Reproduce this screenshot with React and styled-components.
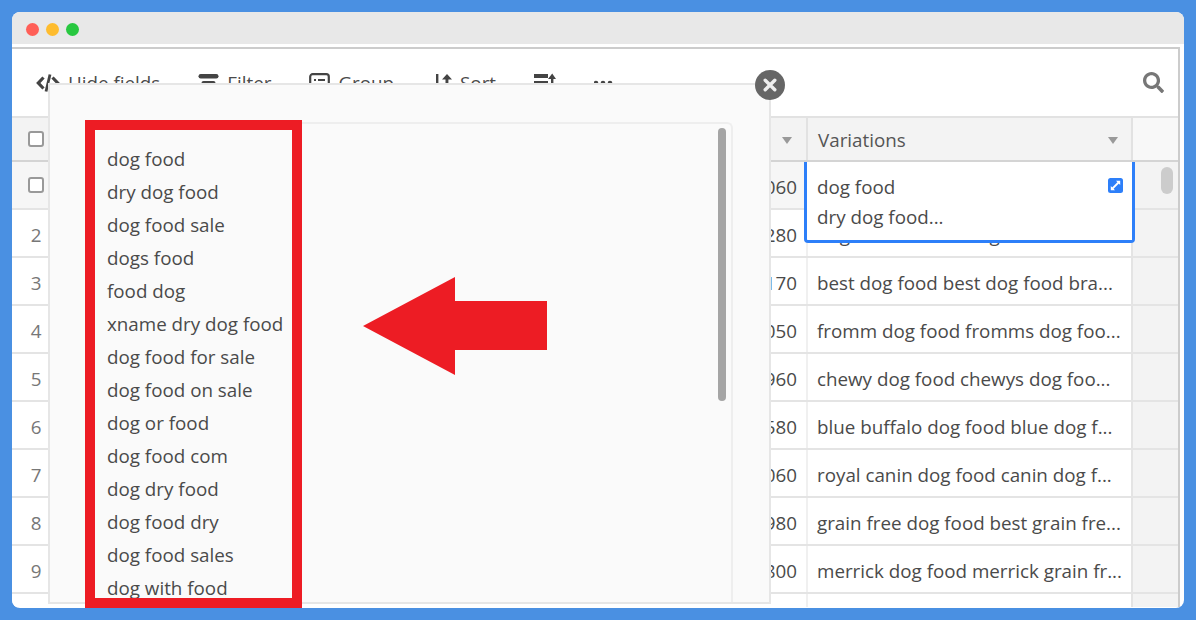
import React from 'react';
import styled, { createGlobalStyle } from 'styled-components';
import { FaSearch } from 'react-icons/fa';

const keywords = [
  'dog food',
  'dry dog food',
  'dog food sale',
  'dogs food',
  'food dog',
  'xname dry dog food',
  'dog food for sale',
  'dog food on sale',
  'dog or food',
  'dog food com',
  'dog dry food',
  'dog food dry',
  'dog food sales',
  'dog with food',
];

const rows = [
  { id: 1, volume: '14,060', variations: '' },
  { id: 2, volume: '12,280', variations: 'dog food brands dog food...' },
  { id: 3, volume: '11,170', variations: 'best dog food best dog food bra...' },
  { id: 4, volume: '10,050', variations: 'fromm dog food fromms dog foo...' },
  { id: 5, volume: '9,960', variations: 'chewy dog food chewys dog foo...' },
  { id: 6, volume: '9,580', variations: 'blue buffalo dog food blue dog f...' },
  { id: 7, volume: '9,060', variations: 'royal canin dog food canin dog f...' },
  { id: 8, volume: '8,980', variations: 'grain free dog food best grain fre...' },
  { id: 9, volume: '8,800', variations: 'merrick dog food merrick grain fr...' },
  { id: 10, volume: '', variations: '' },
];

const CodeIcon = () => (
  <svg width="24" height="20" viewBox="0 0 24 20" fill="none" stroke="#444" strokeWidth="3.2">
    <path d="M7.5 4.5L2.3 10l5.2 5.5" />
    <path d="M16.5 4.5l5.2 5.5-5.2 5.5" />
    <path d="M14 1.5L10 18.5" strokeWidth="2.8" />
  </svg>
);

const FilterIcon = () => (
  <svg width="21" height="20" viewBox="0 0 21 20" fill="#444">
    <rect x="0.5" y="1" width="20" height="4.5" rx="2.2" />
    <rect x="3.5" y="8" width="14" height="4.5" rx="2" />
    <rect x="6.5" y="15" width="8" height="4" rx="2" />
  </svg>
);

const GroupIcon = () => (
  <svg width="21" height="20" viewBox="0 0 21 20" fill="none" stroke="#444">
    <rect x="1.2" y="1.2" width="18.6" height="17.6" rx="2.5" strokeWidth="2.2" />
    <path d="M5 7h2M9 7h7M5 11.5h2M9 11.5h7" strokeWidth="2.2" />
  </svg>
);

const SortIcon = () => (
  <svg width="20" height="20" viewBox="0 0 20 20" fill="#444">
    <path d="M4 1h2.4v14H10l-4.8 4.5L0.6 15H4z" />
    <path d="M13.5 19V6.5H10L15 1l5 5.5h-3.6V19z" />
  </svg>
);

const RowHeightIcon = () => (
  <svg width="22" height="20" viewBox="0 0 22 20" fill="#444">
    <rect x="0" y="1" width="14" height="4" />
    <rect x="0" y="8" width="14" height="2.4" />
    <rect x="0" y="14" width="14" height="2.4" />
    <path d="M17 19V6H14l4.2-5.5L22 6h-2.6v13z" />
  </svg>
);

const MoreIcon = () => (
  <svg width="20" height="20" viewBox="0 0 20 20" fill="#444">
    <circle cx="2" cy="10" r="2.3" />
    <circle cx="9" cy="10" r="2.3" />
    <circle cx="16" cy="10" r="2.3" />
  </svg>
);

const CloseIcon = () => (
  <svg width="14" height="14" viewBox="0 0 14 14" stroke="#eee" strokeWidth="3.4" strokeLinecap="round">
    <path d="M2.2 2.2l9.6 9.6M11.8 2.2l-9.6 9.6" />
  </svg>
);

const ExpandIcon = () => (
  <svg width="15" height="15" viewBox="0 0 15 15">
    <rect width="15" height="15" rx="2.5" fill="#2d7ff9" />
    <path d="M4 11l7-7" stroke="#fff" strokeWidth="1.8" />
    <path d="M8 2.8h4.2V7zM2.8 8v4.2H7z" fill="#fff" />
  </svg>
);

const App = () => {
  return (
    <>
      <GlobalStyle />
      <Window>
        <TitleBar>
          <Dot $color="#ff5f57" />
          <Dot $color="#febc2e" />
          <Dot $color="#28c840" />
        </TitleBar>

        <Frame>
          <Toolbar>
            <ToolButton><CodeIcon />Hide fields</ToolButton>
            <ToolButton><FilterIcon />Filter</ToolButton>
            <ToolButton><GroupIcon />Group</ToolButton>
            <ToolButton><SortIcon />Sort</ToolButton>
            <ToolButton><RowHeightIcon /></ToolButton>
            <ToolButton><MoreIcon /></ToolButton>
            <SearchButton><FaSearch size={21} color="#777" /></SearchButton>
          </Toolbar>

          <Table>
            <HeaderRow>
              <HeaderCheckCell><CheckBox /></HeaderCheckCell>
              <VolumeHeader><Caret /></VolumeHeader>
              <HeaderCell>Variations<Caret /></HeaderCell>
              <HeaderGutter />
            </HeaderRow>

            {rows.map((row) => (
              <Row key={row.id} $active={row.id === 1}>
                <NumberCell>
                  {row.id === 1 && <RowCheckBox />}
                  {row.id > 1 && row.id < 10 && row.id}
                </NumberCell>
                <VolumeCell>{row.volume}</VolumeCell>
                <VariationCell>{row.variations}</VariationCell>
                <Gutter />
              </Row>
            ))}

            <ActiveCell>
              <ActiveText>
                dog food
                <br />
                dry dog food...
              </ActiveText>
              <ExpandButton><ExpandIcon /></ExpandButton>
            </ActiveCell>
            <ScrollThumb />
          </Table>
        </Frame>

        <Modal>
          <CloseButton><CloseIcon /></CloseButton>
          <ListBox>
            {keywords.map((word) => (
              <ListItem key={word}>{word}</ListItem>
            ))}
            <ListThumb />
          </ListBox>
          <RedBox />
          <RedArrow viewBox="0 0 184 98" width="184" height="98">
            <path d="M0 49L92 0V24H184V73H92V98z" fill="#ed1c24" />
          </RedArrow>
        </Modal>
      </Window>
    </>
  );
};

const GlobalStyle = createGlobalStyle`
  html, body {
    margin: 0;
    padding: 0;
    background: #4a90e2;
  }
  body {
    font-family: "Open Sans", "Noto Sans", sans-serif;
    color: #4a4a4a;
  }
  * {
    box-sizing: border-box;
  }
`;

const Window = styled.div`
  position: relative;
  width: 1172px;
  height: 596px;
  margin: 12px 0 0 12px;
  background: #fff;
  border-radius: 8px;
  overflow: hidden;
`;

const TitleBar = styled.div`
  display: flex;
  align-items: center;
  gap: 7px;
  height: 32px;
  padding: 2px 0 0 14px;
  background: #e8e8e8;
`;

const Dot = styled.span`
  width: 13px;
  height: 13px;
  border-radius: 50%;
  background: ${({ $color }) => $color};
`;

const Frame = styled.div`
  display: flex;
  flex-direction: column;
  width: 1168px;
  height: 560px;
  margin-top: 3px;
  border-top: 2px solid #ccc;
  border-right: 2px solid #ccc;
  overflow: hidden;
`;

const Toolbar = styled.div`
  display: flex;
  align-items: center;
  gap: 38px;
  flex: 0 0 67px;
  padding: 0 14px 0 24px;
`;

const ToolButton = styled.div`
  display: flex;
  align-items: center;
  gap: 8px;
  font-size: 18.8px;
  white-space: nowrap;
`;

const SearchButton = styled.div`
  display: flex;
  margin-left: auto;
`;

const Table = styled.div`
  position: relative;
  flex: 1;
  border-top: 2px solid #e2e2e2;
`;

const HeaderRow = styled.div`
  display: grid;
  grid-template-columns: 48px 748px 325px 1fr;
  height: 44px;
  border-bottom: 2px solid #d4d4d4;
  background: #f3f3f3;
`;

const HeaderCheckCell = styled.div`
  display: flex;
  align-items: center;
  justify-content: center;
`;

const HeaderCell = styled.div`
  display: flex;
  align-items: center;
  justify-content: space-between;
  padding: 2px 13px 0 10px;
  font-size: 18.8px;
  color: #555;
  border-right: 2px solid #e2e2e2;
`;

const VolumeHeader = styled(HeaderCell)`
  justify-content: flex-end;
  padding-right: 14px;
`;

const HeaderGutter = styled.div`
  background: #f8f8f8;
`;

const Caret = styled.span`
  width: 0;
  height: 0;
  border-left: 5px solid transparent;
  border-right: 5px solid transparent;
  border-top: 7px solid #999;
`;

const CheckBox = styled.span`
  display: block;
  width: 16px;
  height: 16px;
  border: 2px solid #999;
  border-radius: 3px;
  background: #fff;
`;

const RowCheckBox = styled(CheckBox)`
  margin-top: -4px;
`;

const Row = styled.div`
  display: grid;
  grid-template-columns: 48px 748px 325px 1fr;
  height: 48px;
  border-bottom: 2px solid #e4e4e4;
  background: ${({ $active }) => ($active ? '#f6f6f6' : '#fff')};
`;

const NumberCell = styled.div`
  display: flex;
  align-items: center;
  justify-content: center;
  padding-top: 4px;
  font-size: 18.8px;
  color: #777;
`;

const VolumeCell = styled.div`
  display: flex;
  align-items: center;
  justify-content: flex-end;
  padding: 4px 9px 0 0;
  font-size: 18.8px;
  border-right: 2px solid #f0f0f0;
`;

const VariationCell = styled.div`
  display: flex;
  align-items: center;
  padding: 4px 0 0 9px;
  font-size: 18.8px;
  white-space: nowrap;
  overflow: hidden;
  background: #fff;
  border-right: 2px solid #e4e4e4;
`;

const Gutter = styled.div`
  background: #f3f3f3;
`;

const ScrollThumb = styled.div`
  position: absolute;
  top: 49px;
  right: 5px;
  width: 12px;
  height: 27px;
  border-radius: 6px;
  background: #ccc;
`;

const ActiveCell = styled.div`
  position: absolute;
  top: 44px;
  left: 792px;
  display: flex;
  justify-content: space-between;
  width: 331px;
  height: 81px;
  padding: 10px 9px 0 10px;
  background: #fff;
  border: 3px solid #2d7ff9;
  border-top: none;
  border-radius: 0 0 4px 4px;
`;

const ActiveText = styled.div`
  font-size: 18.8px;
  line-height: 30px;
`;

const ExpandButton = styled.div`
  display: flex;
  margin-top: 6px;
  height: 15px;
`;

const Modal = styled.div`
  position: absolute;
  top: 71px;
  left: 36px;
  bottom: 4px;
  display: flex;
  width: 723px;
  padding: 37px 36px 0 35px;
  background: #fafafa;
  border: 2px solid #e6e6e6;
`;

const CloseButton = styled.div`
  position: absolute;
  top: -15px;
  right: -16px;
  display: flex;
  align-items: center;
  justify-content: center;
  width: 30px;
  height: 30px;
  border-radius: 50%;
  background: #666;
`;

const ListBox = styled.div`
  position: relative;
  flex: 1;
  padding: 19px 0 0 20px;
  border: 2px solid #eee;
  border-bottom: none;
  border-radius: 6px 6px 0 0;
  overflow: hidden;
`;

const ListItem = styled.div`
  font-size: 18.8px;
  line-height: 33px;
`;

const ListThumb = styled.div`
  position: absolute;
  top: 4px;
  right: 5px;
  width: 8px;
  height: 273px;
  border-radius: 4px;
  background: #a5a5a5;
`;

const RedBox = styled.div`
  position: absolute;
  top: 35px;
  left: 35px;
  width: 217px;
  height: 488px;
  border: 10px solid #ed1c24;
`;

const RedArrow = styled.svg`
  position: absolute;
  top: 192px;
  left: 313px;
`;

export default App;
